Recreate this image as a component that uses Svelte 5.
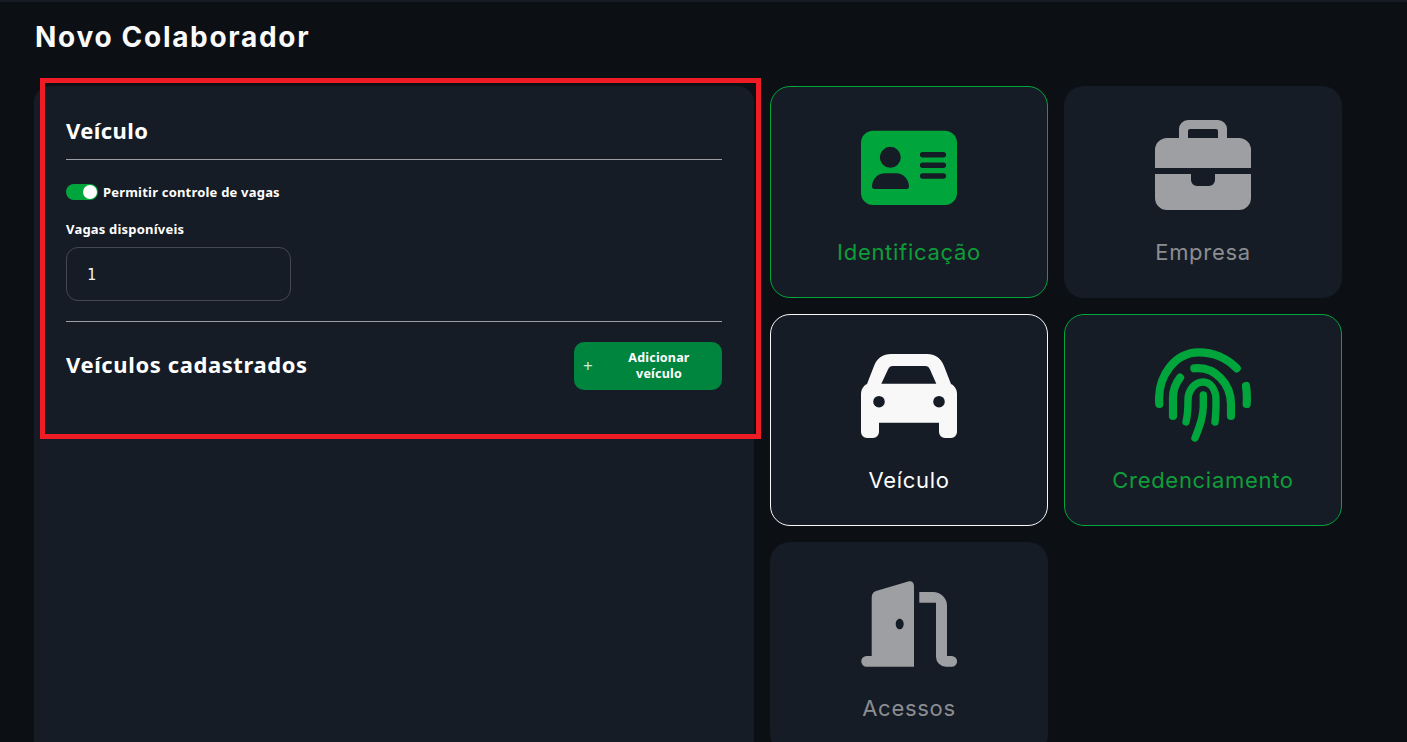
<script lang="ts">
  const cards = [
    { id: 'id', label: 'Identificação', state: 'done' },
    { id: 'company', label: 'Empresa', state: 'idle' },
    { id: 'car', label: 'Veículo', state: 'active' },
    { id: 'finger', label: 'Credenciamento', state: 'done' },
    { id: 'door', label: 'Acessos', state: 'idle' }
  ];
  let allowSpots = $state(true);
  let spots = $state('1');
</script>

<div class="page">
  <h1>Novo Colaborador</h1>

  <div class="content">
    <section class="panel">
      <h2>Veículo</h2>
      <hr />
      <button class="toggle-row" onclick={() => (allowSpots = !allowSpots)}>
        <span class="toggle" class:off={!allowSpots}><span class="knob"></span></span>
        <span>Permitir controle de vagas</span>
      </button>
      <label class="field">
        <span>Vagas disponíveis</span>
        <input bind:value={spots} />
      </label>
      <hr class="second" />
      <div class="vehicles">
        <h3>Veículos cadastrados</h3>
        <button class="add">
          <span class="plus">+</span>
          <span class="add-text">Adicionar veículo</span>
        </button>
      </div>
    </section>

    <nav class="cards">
      {#each cards as card}
        <button class="card {card.state}">
          <svg viewBox="0 0 96 96" width="96" height="96" fill="currentColor" aria-hidden="true">
            {#if card.id === 'id'}
              <path fill-rule="evenodd" d="M12 10.7H84A12 12 0 0 1 96 22.7V73A12 12 0 0 1 84 85H12A12 12 0 0 1 0 73V22.7A12 12 0 0 1 12 10.7ZM29.3 26.8A10.5 10.5 0 1 0 29.3 47.8A10.5 10.5 0 1 0 29.3 26.8ZM24 53.3C16.5 53.3 11 59.5 11 66.5C11 68 12 69 13.5 69H45.5C47 69 48 68 48 66.5C48 59.5 42.5 53.3 35 53.3ZM61.6 32.1A2.7 2.7 0 0 0 61.6 37.5H82.4A2.7 2.7 0 0 0 82.4 32.1ZM61.6 42.6A2.7 2.7 0 0 0 61.6 48H82.4A2.7 2.7 0 0 0 82.4 42.6ZM61.6 53.3A2.7 2.7 0 0 0 61.6 58.7H82.4A2.7 2.7 0 0 0 82.4 53.3Z" />
            {:else if card.id === 'company'}
              <path fill-rule="evenodd" d="M33 0H63A9 9 0 0 1 72 9V18H84A12 12 0 0 1 96 30V48H0V30A12 12 0 0 1 12 18H24V9A9 9 0 0 1 33 0ZM35 9A2 2 0 0 0 33 11V18H63V11A2 2 0 0 0 61 9Z" />
              <path d="M0 54H36V60A6 6 0 0 0 42 66H54A6 6 0 0 0 60 60V54H96V78A12 12 0 0 1 84 90H12A12 12 0 0 1 0 78Z" />
            {:else if card.id === 'car'}
              <path fill-rule="evenodd" d="M30 6H66C74 6 80 10 83 18L90 36C94 38 96 42 96 46V84A6 6 0 0 1 90 90H84A6 6 0 0 1 78 84V74.7H18V84A6 6 0 0 1 12 90H6A6 6 0 0 1 0 84V46C0 42 2 38 6 36L13 18C16 10 22 6 30 6ZM32 18C29.5 18 28 19 27 21.5L20.3 35.7H75.3L69 21.5C68 19 66.5 18 64 18ZM18 47.9A5.8 5.8 0 1 0 18 59.5A5.8 5.8 0 1 0 18 47.9ZM78 47.9A5.8 5.8 0 1 0 78 59.5A5.8 5.8 0 1 0 78 47.9Z" />
            {:else if card.id === 'finger'}
              <g fill="none" stroke="currentColor" stroke-width="8.2" stroke-linecap="round">
                <path d="M4.3 56C2 28 20 4.3 44 4.3C58 4.3 72 10 81.7 20.3" />
                <path d="M39.3 20.3C60 18 76 36 76 56V68" />
                <path d="M25 29.7C20 36 18 44 18 50V68" />
                <path stroke-width="7.4" d="M31 74C33 66 33 60 33 52C33 42 40 34 48 34C56 34 61 42 61 52C61 60 61 66 60 74" />
                <path stroke-width="7.4" d="M48.3 47V58C48.3 70 44 80 40 90" />
                <path d="M91 38C92 44 92 50 91.7 56" />
              </g>
            {:else}
              <path fill-rule="evenodd" d="M10.7 22C10.7 18.5 12 16 15 15L48 5.3C51 4.8 53 6.8 53 10V90.7H5.6A5.3 5.3 0 0 1 5.6 80H10.7ZM38.7 42.7C36.5 42.7 34.7 45 34.7 48C34.7 51 36.5 53.3 38.7 53.3C40.9 53.3 42.7 51 42.7 48C42.7 45 40.9 42.7 38.7 42.7Z" />
              <path d="M58.3 16H72A14 14 0 0 1 86 30V80H90.7A5.3 5.3 0 0 1 90.7 90.7H85A10 10 0 0 1 75 80.7V26.7H58.3Z" />
            {/if}
          </svg>
          <span class="label">{card.label}</span>
        </button>
      {/each}
    </nav>
  </div>

  <div class="highlight"></div>
</div>

<style>
  :global(body) {
    margin: 0;
    background: #0c0f14;
  }

  .page {
    position: relative;
    height: 742px;
    overflow: hidden;
    box-sizing: border-box;
    border-top: 2px solid #171b23;
    padding-left: 34px;
    background: #0c0f14;
    color: #fff;
    font-family: 'Noto Sans', sans-serif;
  }

  h1 {
    margin: 0 0 0 1px;
    height: 84px;
    box-sizing: border-box;
    padding-top: 16px;
    font: 700 28px/38px Inter, sans-serif;
    letter-spacing: 1.7px;
    color: #fafafa;
  }

  .content {
    display: flex;
    align-items: flex-start;
    gap: 16px;
  }

  .panel {
    width: 720px;
    height: 700px;
    flex: none;
    box-sizing: border-box;
    padding: 28px 32px 0;
    background: #161c25;
    border-radius: 16px;
  }

  h2 {
    margin: 0;
    font: 700 22px/32px 'Noto Sans', sans-serif;
    letter-spacing: 0.4px;
  }

  hr {
    margin: 13px 0 0;
    border: 0;
    border-top: 1px solid #9c9ea3;
  }

  hr.second {
    margin-top: 20px;
  }

  .toggle-row {
    display: flex;
    align-items: center;
    gap: 5px;
    margin-top: 23px;
    padding: 0;
    background: none;
    border: 0;
    color: #fff;
    font: 700 13px/18px 'Noto Sans', sans-serif;
    letter-spacing: 0.2px;
  }

  .toggle {
    display: flex;
    justify-content: flex-end;
    align-items: center;
    width: 32px;
    height: 16px;
    box-sizing: border-box;
    padding: 1px;
    background: #00a63c;
    border-radius: 8px;
  }

  .toggle.off {
    justify-content: flex-start;
    background: #555;
  }

  .knob {
    width: 14px;
    height: 14px;
    background: #fff;
    border-radius: 50%;
  }

  .field {
    display: block;
    margin-top: 19px;
    font: 700 13px/18px 'Noto Sans', sans-serif;
    letter-spacing: 0.2px;
  }

  .field span {
    display: block;
  }

  .field input {
    display: block;
    width: 225px;
    height: 54px;
    box-sizing: border-box;
    margin-top: 9px;
    padding: 2px 20px 0;
    background: transparent;
    border: 1px solid #45484f;
    border-radius: 12px;
    color: #f2f2f2;
    font: 400 15px 'DejaVu Sans Mono', monospace;
    outline: none;
  }

  .vehicles {
    display: flex;
    justify-content: space-between;
    align-items: center;
    margin-top: 20px;
  }

  h3 {
    margin: 0 0 4px;
    font: 700 22px/32px 'Noto Sans', sans-serif;
    letter-spacing: 0.6px;
  }

  .add {
    display: flex;
    align-items: center;
    width: 148px;
    height: 48px;
    box-sizing: border-box;
    padding: 0 20px 0 8px;
    background: #00853e;
    border: 0;
    border-radius: 10px;
    color: #fff;
    font: 700 12.5px/16px 'Noto Sans', sans-serif;
    letter-spacing: 0.2px;
  }

  .plus {
    width: 12px;
    font-size: 17px;
    font-weight: 400;
    color: #cfe8d8;
  }

  .add-text {
    flex: 1;
    padding: 0 0 0 22px;
    text-align: center;
  }

  .cards {
    display: grid;
    grid-template-columns: 278px 278px;
    grid-auto-rows: 212px;
    gap: 16px;
  }

  .card {
    display: flex;
    flex-direction: column;
    align-items: center;
    box-sizing: border-box;
    padding: 33px 0 0;
    background: #161c25;
    border: 1px solid transparent;
    border-radius: 20px;
    color: #9e9fa3;
  }

  .card.done {
    border-color: #00a63c;
    color: #00a63c;
  }

  .card.active {
    border-color: #f8f8f8;
    color: #f8f8f8;
  }

  .label {
    margin-top: 22px;
    font: 400 22px/28px Inter, sans-serif;
    letter-spacing: 0.7px;
    color: #8b8d92;
  }

  .done .label {
    color: #0f9d3a;
  }

  .active .label {
    color: #fff;
  }

  .highlight {
    position: absolute;
    left: 40px;
    top: 76px;
    width: 721px;
    height: 361px;
    box-sizing: border-box;
    border: 5px solid #ee1c25;
    pointer-events: none;
  }
</style>
